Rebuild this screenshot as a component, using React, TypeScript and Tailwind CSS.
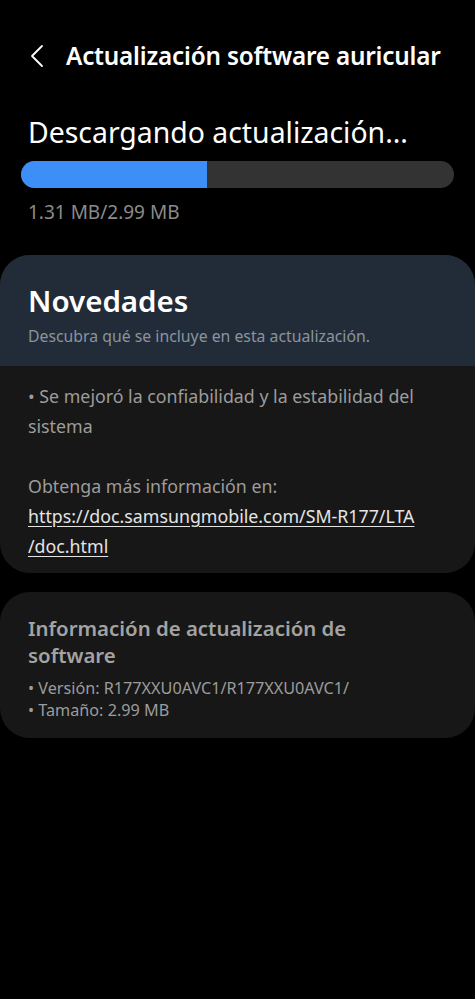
export default function App() {
  const font = { fontFamily: '"Noto Sans", Roboto, sans-serif' };
  return (
    <main className="min-h-[999px] w-[475px] bg-black pt-[28px] pb-[1px]" style={font}>
      {/* Top bar */}
      <header className="flex items-center h-[56px] pl-[28px]">
        <svg width="18" height="24" viewBox="0 0 18 24" fill="none" stroke="#ffffff" strokeWidth="1.8" strokeLinecap="round" strokeLinejoin="round">
          <path d="M14 2L4 12l10 10" />
        </svg>
        <h1 className="ml-[20px] text-[24.3px] font-semibold text-white tracking-[-0.2px]">
          Actualización software auricular
        </h1>
      </header>

      {/* Download status */}
      <section className="px-[21px] mt-[30px]">
        <p className="pl-[7px] text-[28.4px] leading-[36px] text-white">Descargando actualización...</p>
        <div className="mt-[11px] h-[27px] rounded-full bg-[#333333] overflow-hidden">
          <div className="h-full bg-[#3e8ef8]" style={{ width: "43%" }} />
        </div>
        <p className="pl-[7px] mt-[10px] text-[19px] text-[#8b8b8b]">1.31 MB/2.99 MB</p>
      </section>

      {/* Novedades */}
      <section className="mt-[28px] rounded-[30px] overflow-hidden bg-[#171717]">
        <div className="bg-[#222c38] px-[28px] pt-[26px] pb-[18px]">
          <h2 className="text-[29.5px] leading-[40px] font-semibold text-white">Novedades</h2>
          <p className="mt-[4px] text-[15.8px] text-[#8a949f]">Descubra qué se incluye en esta actualización.</p>
        </div>
        <div className="px-[28px] pt-[15px] pb-[12px] text-[17.8px] leading-[30px] text-[#9c9c9c]">
          <p>• Se mejoró la confiabilidad y la estabilidad del sistema</p>
          <p className="mt-[30px]">Obtenga más información en:</p>
          <p className="underline text-[#e4e4e4] underline-offset-[3px]">
            https://doc.samsungmobile.com/SM-R177/LTA
            <br />
            /doc.html
          </p>
        </div>
      </section>

      {/* Info */}
      <section className="mt-[19px] rounded-[30px] bg-[#171717] px-[28px] pt-[23px] pb-[17px]">
        <h3 className="text-[20.4px] leading-[27px] font-semibold text-[#a3a3a3] pr-[90px]">
          Información de actualización de software
        </h3>
        <div className="mt-[8px] text-[16.2px] leading-[22px] text-[#9c9c9c]">
          <p>• Versión: R177XXU0AVC1/R177XXU0AVC1/</p>
          <p>• Tamaño: 2.99 MB</p>
        </div>
      </section>
    </main>
  );
}
